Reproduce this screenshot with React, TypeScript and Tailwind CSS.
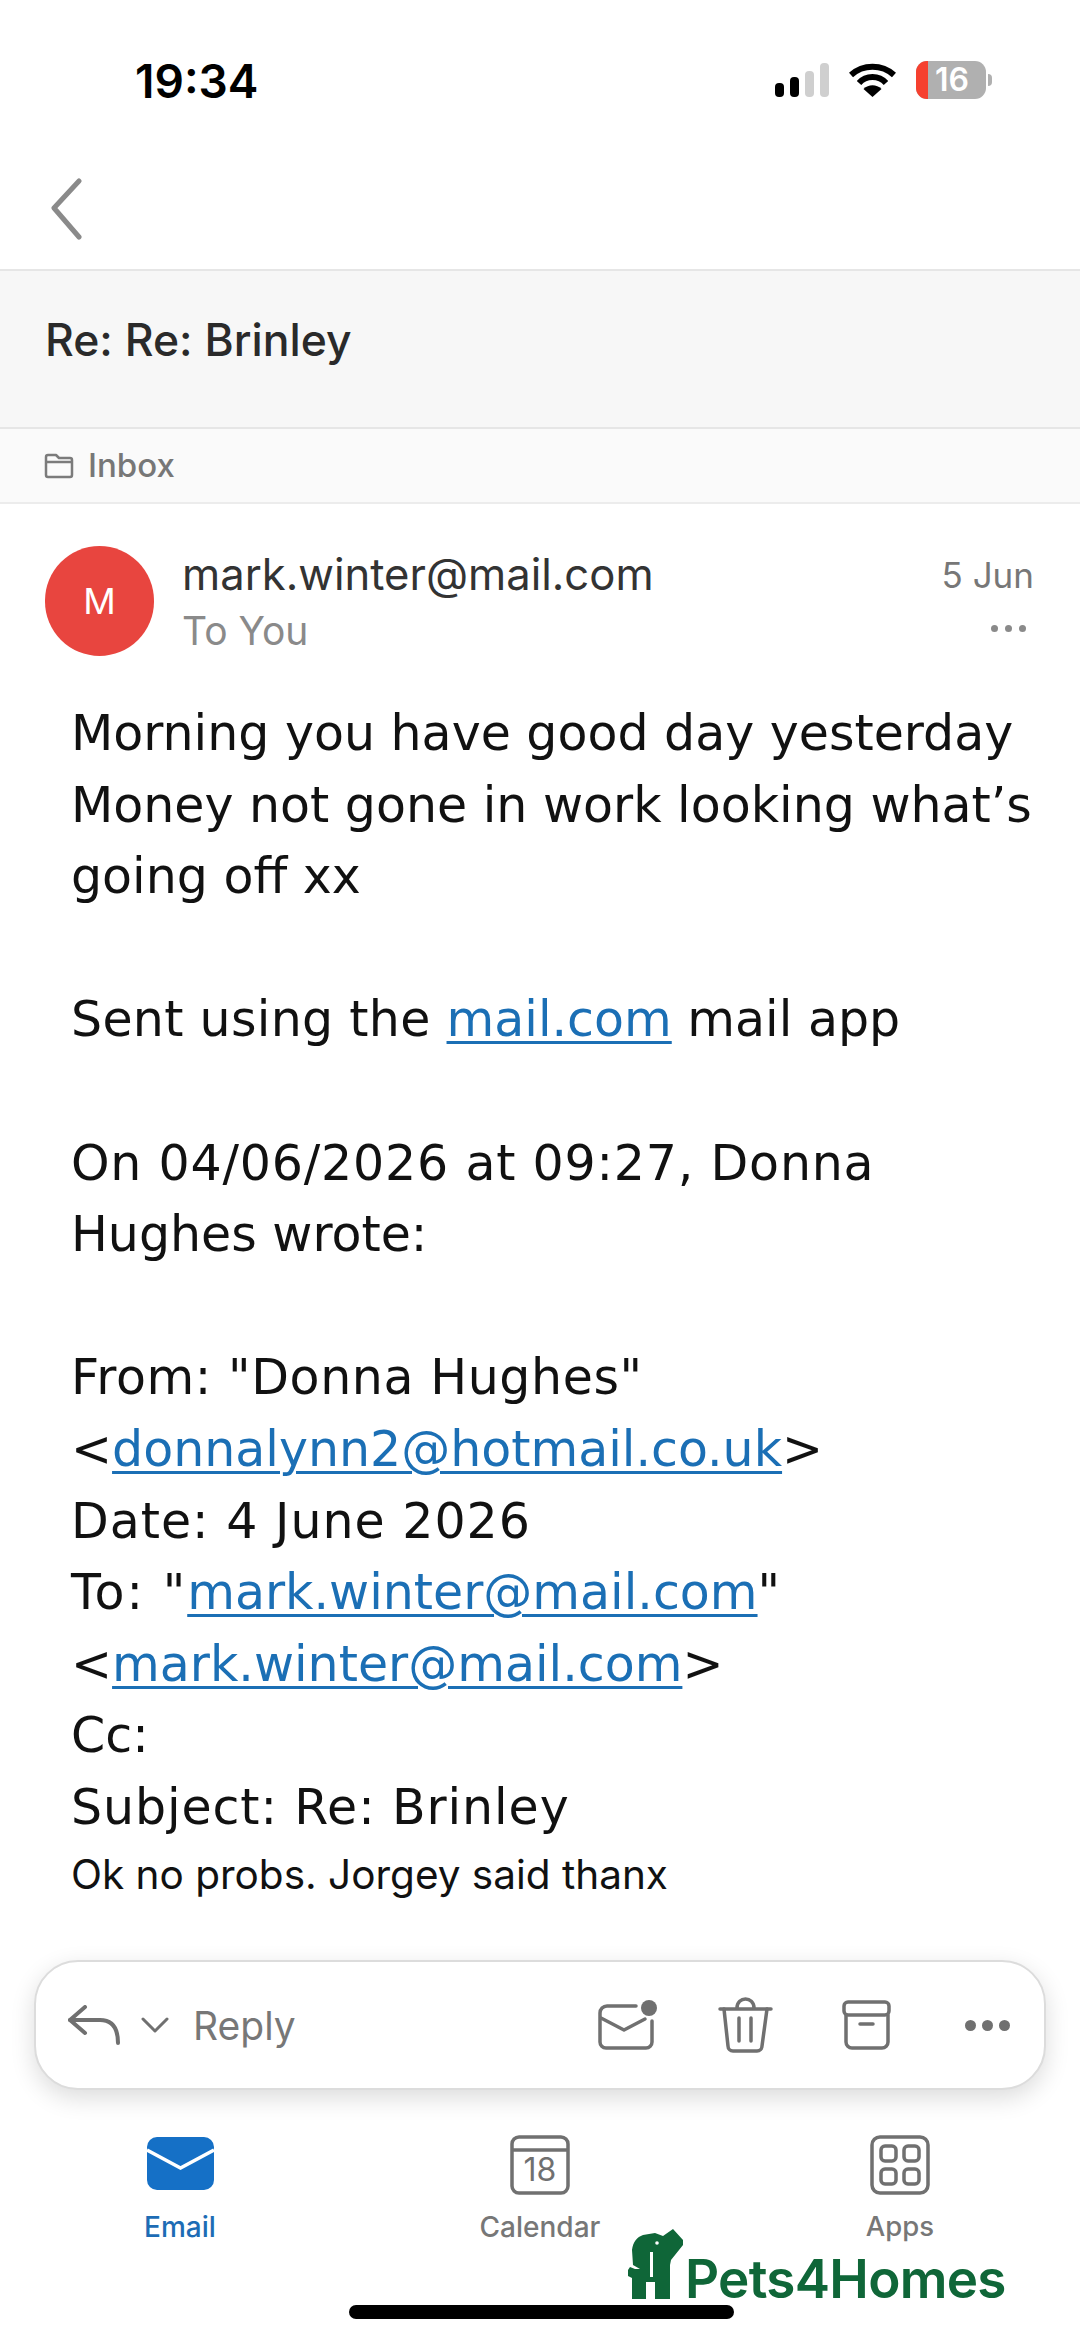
const sans = "font-['Inter',sans-serif]";

function Signal() {
  return (
    <svg width="54" height="34" viewBox="0 0 54 34">
      <rect x="0" y="20" width="9" height="14" rx="4" fill="#000" />
      <rect x="15" y="14" width="9" height="20" rx="4" fill="#000" />
      <rect x="30" y="8" width="9" height="26" rx="4" fill="#cfcfcf" />
      <rect x="45" y="0" width="9" height="34" rx="4" fill="#cfcfcf" />
    </svg>
  );
}

function Wifi() {
  return (
    <svg width="47" height="34" viewBox="0 0 47 34" fill="none" stroke="#000" strokeWidth="6">
      <path d="M2 12C14 1 33 1 45 12" />
      <path d="M10 20C17 12 30 12 37 20" />
      <path d="M23.5 34l-9-8c5-5 13-5 18 0z" fill="#000" stroke="none" />
    </svg>
  );
}

function Battery() {
  return (
    <div className="flex items-center">
      <div className="relative flex h-[38px] w-[70px] items-center justify-center overflow-hidden rounded-[11px] bg-[#b0b0b0] pl-[2px]">
        <div className="absolute inset-y-0 left-0 w-[12px] bg-[#f6402f]" />
        <span className={`${sans} relative text-[32px] font-semibold leading-none text-white`}>16</span>
      </div>
      <div className="ml-[2px] h-[12px] w-[4px] rounded-r-full bg-[#b0b0b0]" />
    </div>
  );
}

function BodyLink({ children }: { children: React.ReactNode }) {
  return <span className="text-[#1b6fb5] underline underline-offset-[5px] decoration-[3px]">{children}</span>;
}

export default function App() {
  return (
    <div className={`flex h-[2341px] w-[1080px] flex-col overflow-hidden bg-white ${sans}`}>
      {/* status bar */}
      <div className="flex h-[156px] shrink-0 items-start justify-between pl-[135px] pr-[88px] pt-[55px]">
        <span className="text-[46px] font-semibold leading-[52px] text-black">19:34</span>
        <div className="flex items-center gap-[20px] pt-[6px]">
          <Signal />
          <Wifi />
          <Battery />
        </div>
      </div>

      {/* back */}
      <div className="flex h-[113px] shrink-0 items-start pl-[48px] pt-[22px]">
        <svg width="40" height="64" viewBox="0 0 40 64" fill="none" stroke="#8a8a8a" strokeWidth="5" strokeLinecap="round" strokeLinejoin="round">
          <path d="M31 3L6 30l25 29" />
        </svg>
      </div>

      {/* subject */}
      <div className="flex h-[160px] shrink-0 items-center border-y-2 border-[#e6e6e6] bg-[#f7f7f7] pb-[18px] pl-[45px]">
        <span className="text-[44.5px] font-medium leading-none text-[#2a2a2a]">Re: Re: Brinley</span>
      </div>

      {/* folder */}
      <div className="flex h-[75px] shrink-0 items-center gap-[14px] border-b-2 border-[#ececec] bg-[#fafafa] pl-[44px]">
        <svg width="30" height="26" viewBox="0 0 30 26" fill="none" stroke="#7b7b7b" strokeWidth="2.5" strokeLinejoin="round">
          <path d="M2 4a2 2 0 0 1 2-2h8l3 3h11a2 2 0 0 1 2 2v15a2 2 0 0 1-2 2H4a2 2 0 0 1-2-2z" />
          <path d="M2 9h26" />
        </svg>
        <span className="text-[33px] font-medium leading-none text-[#777]">Inbox</span>
      </div>

      {/* sender */}
      <div className="flex h-[132px] shrink-0 pl-[45px] pr-[46px] pt-[42px]">
        <div className="flex h-[110px] w-[109px] shrink-0 items-center justify-center rounded-full bg-[#e8453f]">
          <span className="text-[36px] leading-none text-white">M</span>
        </div>
        <div className="ml-[28px] flex-1 pt-[4px]">
          <div className="text-[43.6px] leading-[50px] text-[#333]">mark.winter@mail.com</div>
          <div className="mt-[8px] text-[39px] leading-[46px] text-[#8a8a8a]">To You</div>
        </div>
        <div className="flex flex-col items-end pt-[4px]">
          <span className="text-[35px] leading-[50px] text-[#777]">5 Jun</span>
          <div className="mr-[8px] mt-[25px] flex gap-[7px]">
            <span className="h-[7px] w-[7px] rounded-full bg-[#8a8a8a]" />
            <span className="h-[7px] w-[7px] rounded-full bg-[#8a8a8a]" />
            <span className="h-[7px] w-[7px] rounded-full bg-[#8a8a8a]" />
          </div>
        </div>
      </div>

      {/* message */}
      <div className="flex-1 pl-[71px] pr-[30px] pt-[62px] font-['DejaVu_Sans',sans-serif] text-[49px] leading-[71.6px] text-[#111]">
        <div>Morning you have good day yesterday</div>
        <div>Money not gone in work looking what’s</div>
        <div>going off xx</div>
        <div className="h-[71.6px]" />
        <div><span className="tracking-[0.3px]">Sent using the </span><BodyLink>mail.com</BodyLink> mail app</div>
        <div className="h-[71.6px]" />
        <div className="tracking-[0.8px]">On 04/06/2026 at 09:27, Donna</div>
        <div>Hughes wrote:</div>
        <div className="h-[71.6px]" />
        <div className="tracking-[0.6px]">From: "Donna Hughes"</div>
        <div>&lt;<BodyLink>donnalynn2@hotmail.co.uk</BodyLink>&gt;</div>
        <div className="tracking-[1px]">Date: 4 June 2026</div>
        <div><span className="tracking-[2px]">To: "</span><BodyLink>mark.winter@mail.com</BodyLink>"</div>
        <div>&lt;<BodyLink>mark.winter@mail.com</BodyLink>&gt;</div>
        <div>Cc:</div>
        <div className="tracking-[0.9px]">Subject: Re: Brinley</div>
        <div className={`${sans} text-[40.5px] leading-[62px]`}>Ok no probs. Jorgey said thanx</div>
      </div>

      {/* action bar */}
      <div className="mx-[34px] flex h-[130px] shrink-0 items-center rounded-[44px] border-2 border-[#dcdcdc] bg-white pl-[32px] pr-[34px] shadow-[0_8px_24px_rgba(0,0,0,0.14)]">
        <svg width="52" height="40" viewBox="0 0 52 40" fill="none" stroke="#707070" strokeWidth="4" strokeLinecap="round" strokeLinejoin="round">
          <path d="M17 2L2 15l15 13" />
          <path d="M2 15h30c12 0 18 8 18 23" />
        </svg>
        <svg className="ml-[21px]" width="28" height="16" viewBox="0 0 28 16" fill="none" stroke="#707070" strokeWidth="3" strokeLinecap="round" strokeLinejoin="round">
          <path d="M2 2l12 12L26 2" />
        </svg>
        <span className="ml-[24px] text-[39px] leading-none text-[#777]">Reply</span>
        <div className="ml-auto flex items-center">
          <svg width="61" height="50" viewBox="0 0 61 50" fill="none" stroke="#707070" strokeWidth="3.5" strokeLinecap="round" strokeLinejoin="round">
            <path d="M39 6H10a7 7 0 0 0-7 7v29a6 6 0 0 0 6 6h40a6 6 0 0 0 6-6V21" />
            <path d="M4 18l23 12 21-11" />
            <circle cx="52" cy="8" r="8" fill="#707070" stroke="none" />
          </svg>
          <svg className="ml-[60px]" width="55" height="56" viewBox="0 0 55 56" fill="none" stroke="#707070" strokeWidth="3.5" strokeLinecap="round" strokeLinejoin="round">
            <path d="M2 12h51" />
            <path d="M6 12l4 37a5 5 0 0 0 5 5h24a5 5 0 0 0 5-5l5-37" />
            <path d="M19 11c0-12 17-12 17 0" />
            <path d="M21 21v23M33 21v23" />
          </svg>
          <svg className="ml-[69px]" width="49" height="50" viewBox="0 0 49 50" fill="none" stroke="#707070" strokeWidth="3.5" strokeLinecap="round" strokeLinejoin="round">
            <rect x="2" y="2" width="45" height="13" rx="4" />
            <path d="M4 15v27a6 6 0 0 0 6 6h30a6 6 0 0 0 6-6V15" />
            <path d="M18 24h13" />
          </svg>
          <div className="ml-[74px] flex gap-[6px]">
            <span className="h-[11px] w-[11px] rounded-full bg-[#707070]" />
            <span className="h-[11px] w-[11px] rounded-full bg-[#707070]" />
            <span className="h-[11px] w-[11px] rounded-full bg-[#707070]" />
          </div>
        </div>
      </div>

      {/* tab bar */}
      <div className="relative h-[251px] shrink-0 pt-[45px]">
        <div className="grid grid-cols-3">
          <div className="flex flex-col items-center">
            <svg width="67" height="60" viewBox="0 0 67 60">
              <rect x="0" y="2" width="67" height="53" rx="10" fill="#1570c6" />
              <path d="M0 15l33.5 18L67 15" fill="none" stroke="#fff" strokeWidth="3.5" />
            </svg>
            <span className="mt-[18px] text-[28px] font-medium leading-none text-[#1d6cb5]">Email</span>
          </div>
          <div className="flex flex-col items-center">
            <div className="relative">
              <svg width="60" height="60" viewBox="0 0 60 60" fill="none" stroke="#707070" strokeWidth="3.5">
                <rect x="2" y="2" width="56" height="56" rx="7" />
                <path d="M2 15h56" />
              </svg>
              <span className="absolute inset-x-0 top-[19px] text-center text-[32px] leading-none text-[#707070]">18</span>
            </div>
            <span className="mt-[18px] text-[28px] font-medium leading-none text-[#777]">Calendar</span>
          </div>
          <div className="flex flex-col items-center">
            <svg width="60" height="60" viewBox="0 0 60 60" fill="none" stroke="#707070" strokeWidth="3.5">
              <rect x="2" y="2" width="56" height="56" rx="8" />
              <rect x="11" y="11" width="15" height="15" rx="4" />
              <rect x="34" y="11" width="15" height="15" rx="4" />
              <rect x="11" y="34" width="15" height="15" rx="4" />
              <rect x="34" y="34" width="15" height="15" rx="4" />
            </svg>
            <span className="mt-[18px] text-[27.5px] font-medium leading-none text-[#777]">Apps</span>
          </div>
        </div>

        {/* watermark sits over the tab bar */}
        <div className="absolute left-[628px] top-[139px] flex items-end">
          <svg width="56" height="70" viewBox="0 0 56 70" fill="#0f6638">
            <path d="M4 70V49L0 47V41L2 38L7 40H12L5 36L4 21C5 13 9 8 15 6L27 4L35 7L45 0L55 11V16L43 31L42 36V70H27V53H18V70Z" />
            <rect x="22" y="23" width="3" height="25" fill="#fff" />
            <circle cx="29" cy="14" r="1.8" fill="#fff" />
          </svg>
          <span className="ml-[1px] text-[53px] font-semibold leading-[39px] tracking-[-0.7px] text-[#0f6638]">Pets4Homes</span>
        </div>

        <div className="absolute bottom-[22px] left-[349px] h-[14px] w-[385px] rounded-full bg-black" />
      </div>
    </div>
  );
}
